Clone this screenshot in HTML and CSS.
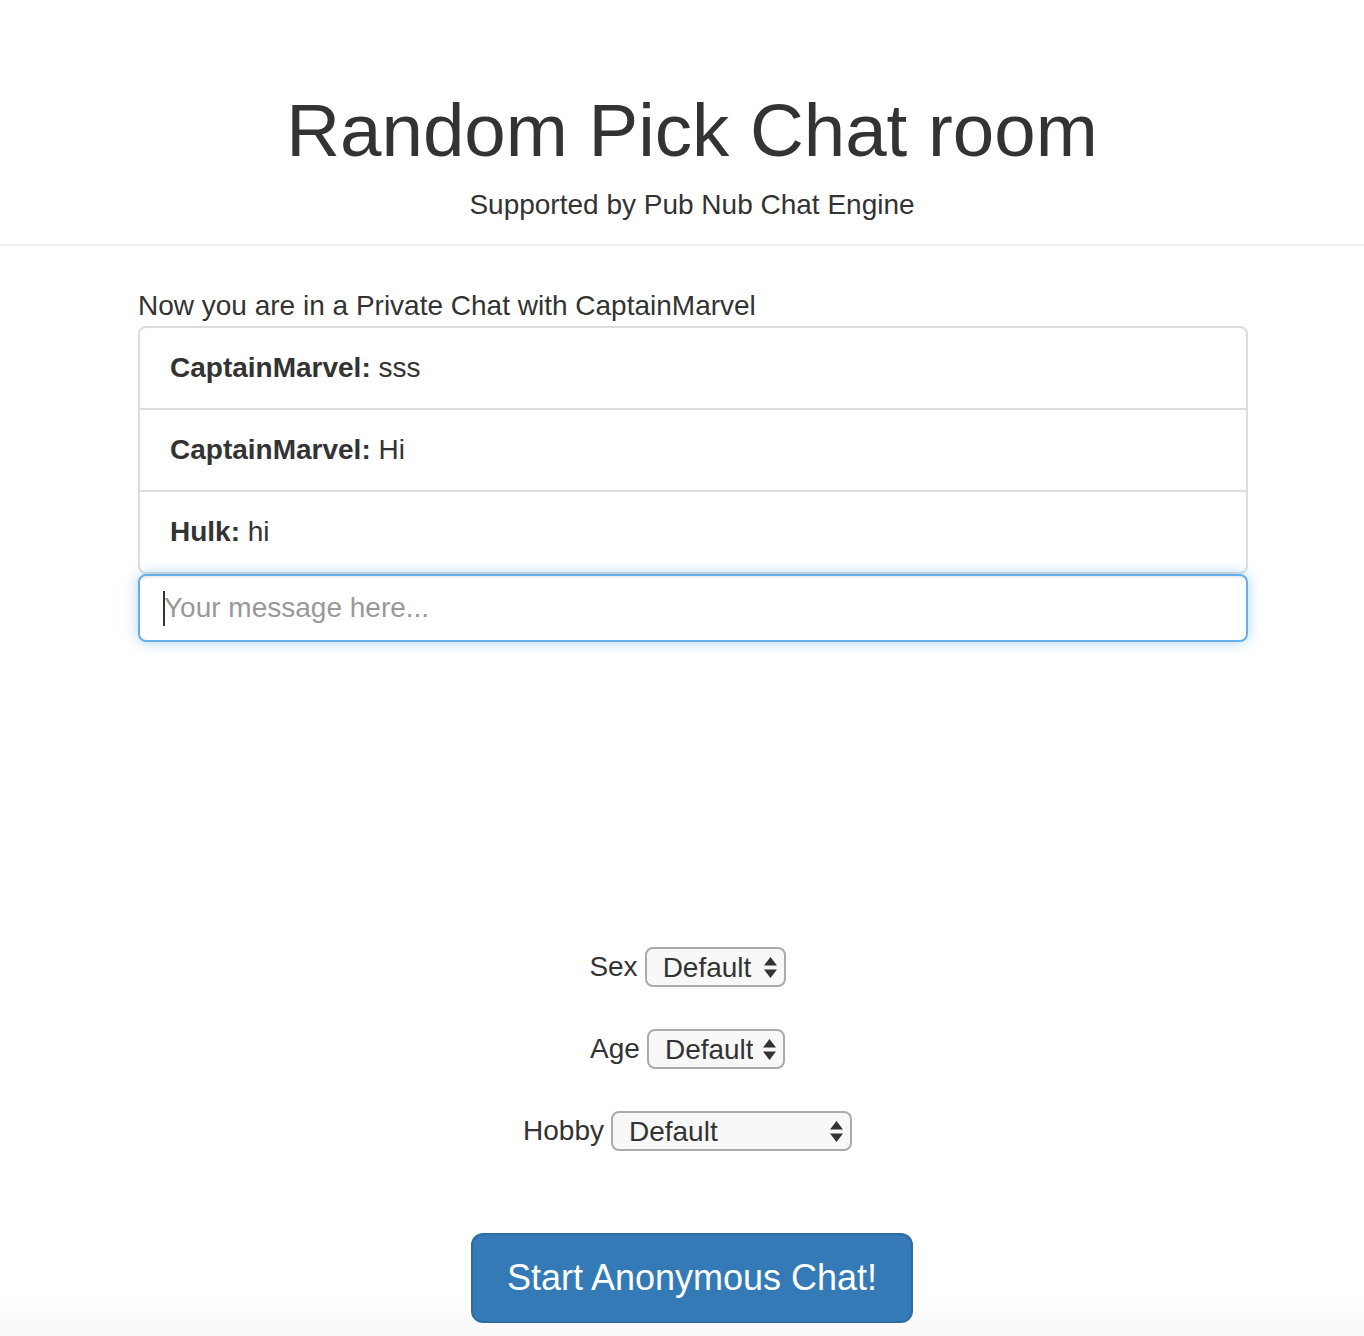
FILE: index.html
```html
<!DOCTYPE html>
<html lang="en">
<head>
<meta charset="utf-8">
<title>Random Pick Chat room</title>
<link rel="stylesheet" href="styles.css">
</head>
<body>
<div class="page">
  <header class="jumbo">
    <h1 class="title">Random Pick Chat room</h1>
    <p class="subtitle">Supported by Pub Nub Chat Engine</p>
  </header>
  <main class="main">
    <div class="chat">
      <div class="chat-status">Now you are in a Private Chat with CaptainMarvel</div>
      <ul class="list-group">
        <li class="list-item"><b>CaptainMarvel:</b> sss</li>
        <li class="list-item"><b>CaptainMarvel:</b> Hi</li>
        <li class="list-item"><b>Hulk:</b> hi</li>
      </ul>
      <div class="input-wrap">
        <input class="msg-input" type="text" placeholder="Your message here...">
        <span class="caret"></span>
      </div>
    </div>
    <form class="filters">
      <div class="filter-row">
        <label class="filter-label" for="sex">Sex</label>
        <span class="select-wrap sel-sex">
          <select id="sex" class="select"><option>Default</option></select>
          <svg class="arrows" width="13" height="21" viewBox="0 0 13 21"><path d="M6.5 0 L13 8.5 L0 8.5 Z M0 12.5 L13 12.5 L6.5 21 Z" fill="#333"/></svg>
        </span>
      </div>
      <div class="filter-row">
        <label class="filter-label" for="age">Age</label>
        <span class="select-wrap sel-age">
          <select id="age" class="select"><option>Default</option></select>
          <svg class="arrows" width="13" height="21" viewBox="0 0 13 21"><path d="M6.5 0 L13 8.5 L0 8.5 Z M0 12.5 L13 12.5 L6.5 21 Z" fill="#333"/></svg>
        </span>
      </div>
      <div class="filter-row">
        <label class="filter-label" for="hobby">Hobby</label>
        <span class="select-wrap sel-hobby">
          <select id="hobby" class="select"><option>Default</option></select>
          <svg class="arrows" width="13" height="21" viewBox="0 0 13 21"><path d="M6.5 0 L13 8.5 L0 8.5 Z M0 12.5 L13 12.5 L6.5 21 Z" fill="#333"/></svg>
        </span>
      </div>
      <div class="btn-row">
        <button type="button" class="btn-start">Start Anonymous Chat!</button>
      </div>
    </form>
  </main>
</div>
</body>
</html>
```

FILE: styles.css
```css
html {
  background: linear-gradient(to bottom, #ffffff 0, #ffffff 1296px, #f8f8f8 1336px);
  min-height: 1336px;
}
body {
  margin: 0;
  font-family: "Liberation Sans", Arial, Helvetica, sans-serif;
  font-size: 28px;
  line-height: 40px;
  color: #333;
}
.page {
  padding-left: 20px;
}
.jumbo {
  padding: 90px 0 19px;
  border-bottom: 2px solid #eee;
  margin-left: -20px;
  padding-left: 20px;
  text-align: center;
}
.title {
  margin: 0 0 12.5px;
  font-size: 74.5px;
  line-height: 82.5px;
  font-weight: normal;
  color: #333;
}
.subtitle {
  margin: 0;
  font-size: 28px;
  line-height: 40px;
}
.main {
  padding-top: 40px;
}
.chat {
  width: 1110px;
  margin: 0 auto 0 118px;
}
.chat-status {
  height: 40px;
}
.list-group {
  list-style: none;
  margin: 0;
  padding: 0;
}
.list-item {
  background: #fff;
  border: 2px solid #ddd;
  padding: 20px 30px;
  margin-bottom: -2px;
  line-height: 40px;
}
.list-item:first-child {
  border-radius: 8px 8px 0 0;
}
.list-item:last-child {
  margin-bottom: 0;
  border-radius: 0 0 8px 8px;
}
.list-item b {
  font-weight: bold;
}
.input-wrap {
  position: relative;
}
.msg-input {
  display: block;
  box-sizing: border-box;
  width: 100%;
  height: 68px;
  padding: 12px 24px;
  font-family: inherit;
  font-size: 28px;
  color: #555;
  background: #fff;
  border: 2px solid #66afe9;
  border-radius: 8px;
  outline: none;
  box-shadow: inset 0 2px 2px rgba(0,0,0,.075), 0 0 14px rgba(102,175,233,.55);
}
.msg-input::placeholder {
  color: #999;
}
.caret {
  position: absolute;
  left: 25px;
  top: 17px;
  width: 2px;
  height: 35px;
  background: #333;
}
.filters {
  margin: 305px 0 0;
}
.filter-row {
  display: flex;
  justify-content: center;
  align-items: center;
  gap: 7px;
  height: 40px;
  margin-bottom: 42px;
  padding-right: 9px;
}
.filter-label {
  line-height: 40px;
}
.select-wrap {
  position: relative;
  display: inline-block;
  height: 40px;
}
.sel-sex { width: 141px; }
.sel-age { width: 138px; }
.sel-hobby { width: 241px; }
.select {
  -webkit-appearance: none;
  appearance: none;
  box-sizing: border-box;
  width: 100%;
  height: 40px;
  margin: 0;
  padding: 0 30px 0 16px;
  font-family: inherit;
  font-size: 28px;
  color: #333;
  background: #f8f8f8;
  border: 2px solid #aaa;
  border-radius: 8px;
}
.arrows {
  position: absolute;
  right: 9px;
  top: 10px;
  pointer-events: none;
}
.btn-row {
  display: flex;
  justify-content: center;
  margin-top: 82px;
}
.btn-start {
  font-family: inherit;
  font-size: 36px;
  line-height: 48px;
  padding: 19px 34px;
  color: #fff;
  background: #337ab7;
  border: 2px solid #2e6da4;
  border-radius: 12px;
  cursor: pointer;
}
```
